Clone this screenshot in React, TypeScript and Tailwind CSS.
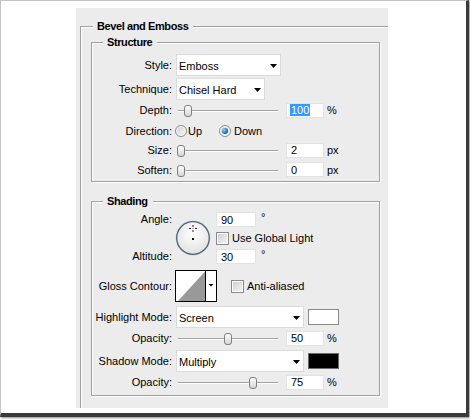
import React from "react";

const F = "font-['Liberation_Sans',Arial,sans-serif]";

function Arrow() {
  return (
    <svg width="7" height="4" viewBox="0 0 7 4" className="block shrink-0">
      <path d="M0 0H7L3.5 4Z" fill="#000" />
    </svg>
  );
}

function Dropdown({ text, className }: { text: string; className: string }) {
  return (
    <div
      className={`h-[22px] bg-white border border-[#dadada] flex items-center justify-between pl-[2px] pr-[3px] shrink-0 ${className}`}
    >
      <span className="pt-[2px]">{text}</span>
      <span className="pt-[2px]">
        <Arrow />
      </span>
    </div>
  );
}

function Field({ children, className }: { children: React.ReactNode; className: string }) {
  return (
    <div className={`h-[15px] bg-white border border-[#e2e2e2] flex items-center pl-[3px] shrink-0 ${className}`}>
      {children}
    </div>
  );
}

function Slider({ pos }: { pos: string }) {
  return (
    <div className="relative w-[102px] h-[14px] shrink-0">
      <div className="absolute left-[2px] right-0 top-[6px] h-px bg-[#a3a3a3] shadow-[0_1px_0_#fff]" />
      <div
        className={`absolute top-px w-[8px] h-[12px] rounded-[3px] border border-[#808080] bg-gradient-to-b from-[#fdfdfd] to-[#d6d6d6] ${pos}`}
      />
    </div>
  );
}

function Label({ children }: { children: React.ReactNode }) {
  return <div className="w-[80px] text-right shrink-0 whitespace-nowrap">{children}</div>;
}

function SliderRow({
  label,
  pos,
  value,
  unit,
  h,
  selected,
}: {
  label: string;
  pos: string;
  value: string;
  unit: string;
  h: string;
  selected?: boolean;
}) {
  return (
    <div className={`flex items-center ${h}`}>
      <Label>{label}</Label>
      <div className="ml-[4px] mt-[2px]">
        <Slider pos={pos} />
      </div>
      <Field className={`ml-[8px] w-[38px] ${selected ? "border-[#c9d6e6]" : ""}`}>
        {selected ? (
          <span className="bg-[#3399ff] text-white px-px leading-[12px]">{value}</span>
        ) : (
          <span className="pl-px">{value}</span>
        )}
      </Field>
      <span className="ml-[3px]">{unit}</span>
    </div>
  );
}

function Radio({ checked }: { checked?: boolean }) {
  return (
    <div className="w-[12px] h-[12px] rounded-full border border-[#8a8a8a] bg-gradient-to-br from-[#cfcfcf] to-[#fbfbfb] shadow-[inset_0_0_0_1px_#fff] flex items-center justify-center shrink-0">
      {checked && (
        <div className="w-[6px] h-[6px] rounded-full bg-[radial-gradient(circle_at_35%_35%,#9fd8ff,#1b6fbf_55%,#0a3a70)]" />
      )}
    </div>
  );
}

function Checkbox() {
  return (
    <div className="w-[13px] h-[13px] border border-[#8a8a8a] bg-gradient-to-br from-[#cdcdcd] to-[#f6f6f6] shadow-[inset_0_0_0_1px_#fff] shrink-0" />
  );
}

function GroupTitle({ children, left }: { children: React.ReactNode; left: string }) {
  return (
    <span className={`absolute top-[-9px] ${left} bg-[#ececec] pl-[4px] pr-[5px] font-bold leading-[16px] tracking-[-0.4px]`}>
      {children}
    </span>
  );
}

function AngleDial() {
  return (
    <svg width="36" height="36" viewBox="0 0 36 36" className="block shrink-0 self-center">
      <defs>
        <radialGradient id="dialg" cx="50%" cy="35%" r="65%">
          <stop offset="0" stopColor="#ffffff" />
          <stop offset="1" stopColor="#e2e2e2" />
        </radialGradient>
      </defs>
      <circle cx="18" cy="18" r="17.5" fill="#c8ccd3" opacity="0.6" />
      <circle cx="18" cy="18" r="16.3" fill="url(#dialg)" stroke="#56627a" strokeWidth="1.3" />
      <rect x="17" y="18" width="2" height="2" fill="#000" />
      <rect x="17.5" y="5" width="1" height="2" fill="#222" />
      <rect x="17.5" y="10" width="1" height="2" fill="#222" />
      <rect x="14" y="8" width="2" height="1" fill="#222" />
      <rect x="20" y="8" width="2" height="1" fill="#222" />
      <rect x="17.5" y="8" width="1" height="1" fill="#555" />
    </svg>
  );
}

function Contour() {
  return (
    <svg width="42" height="32" viewBox="0 0 42 32" className="block shrink-0">
      <rect x="0.5" y="0.5" width="41" height="31" fill="#fff" stroke="#000" />
      <path d="M3 31 L30 1.5 L30 31 Z" fill="#999999" />
      <line x1="30.5" y1="0" x2="30.5" y2="32" stroke="#000" />
      <path d="M33.5 14 H38.5 L36 16.5 Z" fill="#000" />
    </svg>
  );
}

export default function App() {
  return (
    <div className={`w-[470px] h-[420px] bg-white ${F} text-[11px] leading-[14px] text-black`}>
      <div className="w-[469px] h-[417px] border-l border-t border-[#c4c4c4] border-r-[3px] border-b-[4px] border-r-[#3a3a3a] border-b-[#3a3a3a] shadow-[1px_1px_2px_rgba(0,0,0,0.45)]">
        <div className="ml-[75px] mt-[7px] w-[312px] h-[400px] bg-[#ececec] overflow-hidden">
          <div className="relative ml-[4px] mt-[18px] h-[420px] border-l border-t border-[#a0a0a0] shadow-[inset_1px_1px_0_#fff]">
            <GroupTitle left="left-[12px]">Bevel and Emboss</GroupTitle>

            {/* Structure */}
            <div className="relative ml-[10px] mt-[15px] w-[289px] h-[140px] border border-[#a0a0a0] shadow-[inset_1px_1px_0_#fff,1px_1px_0_#fff]">
              <GroupTitle left="left-[11px]">Structure</GroupTitle>
              <div className="pt-[11px] flex flex-col">
                <div className="flex items-center h-[22px]">
                  <Label>Style:</Label>
                  <Dropdown text="Emboss" className="ml-[4px] w-[105px]" />
                </div>
                <div className="flex items-center h-[22px] mt-[2px]">
                  <Label>Technique:</Label>
                  <Dropdown text="Chisel Hard" className="ml-[4px] w-[89px]" />
                </div>
                <SliderRow label="Depth:" pos="left-[8px]" value="100" unit="%" h="h-[20px]" selected />
                <div className="flex items-center h-[21px]">
                  <Label>Direction:</Label>
                  <div className="ml-[3px]">
                    <Radio />
                  </div>
                  <span className="ml-[1px]">Up</span>
                  <div className="ml-[17px]">
                    <Radio checked />
                  </div>
                  <span className="ml-[3px]">Down</span>
                </div>
                <SliderRow label="Size:" pos="left-[1px]" value="2" unit="px" h="h-[18px]" />
                <SliderRow label="Soften:" pos="left-[1px]" value="0" unit="px" h="h-[21px]" />
              </div>
            </div>

            {/* Shading */}
            <div className="relative ml-[10px] mt-[19px] w-[289px] h-[195px] border border-[#a0a0a0] shadow-[inset_1px_1px_0_#fff,1px_1px_0_#fff]">
              <GroupTitle left="left-[11px]">Shading</GroupTitle>
              <div className="pt-[10px] flex flex-col">
                <div className="flex h-[52px]">
                  <div className="w-[80px] shrink-0 flex flex-col justify-between text-right">
                    <div className="leading-[15px]">Angle:</div>
                    <div className="leading-[15px]">Altitude:</div>
                  </div>
                  <div className="ml-[3px] flex">
                    <AngleDial />
                  </div>
                  <div className="ml-[5px] flex flex-col">
                    <div className="flex items-start">
                      <Field className="w-[40px]">
                        <span className="pl-px">90</span>
                      </Field>
                      <span className="ml-[5px] leading-[10px]">°</span>
                    </div>
                    <div className="flex items-center mt-[4px] h-[14px]">
                      <Checkbox />
                      <span className="ml-[3px]">Use Global Light</span>
                    </div>
                    <div className="flex items-start mt-[4px]">
                      <Field className="w-[40px]">
                        <span className="pl-px">30</span>
                      </Field>
                      <span className="ml-[5px] leading-[10px]">°</span>
                    </div>
                  </div>
                </div>

                <div className="flex items-center mt-[6px] h-[32px]">
                  <Label>Gloss Contour:</Label>
                  <div className="ml-[3px]">
                    <Contour />
                  </div>
                  <div className="ml-[14px]">
                    <Checkbox />
                  </div>
                  <span className="ml-[3px]">Anti-aliased</span>
                </div>

                <div className="flex items-center mt-[4px] h-[22px]">
                  <Label>Highlight Mode:</Label>
                  <Dropdown text="Screen" className="ml-[4px] w-[128px]" />
                  <div className="ml-[4px] w-[31px] h-[16px] bg-white border border-[#8a8a8a]" />
                </div>
                <SliderRow label="Opacity:" pos="left-[48px]" value="50" unit="%" h="h-[20px]" />
                <div className="flex items-center mt-[2px] h-[22px]">
                  <Label>Shadow Mode:</Label>
                  <Dropdown text="Multiply" className="ml-[4px] w-[128px]" />
                  <div className="ml-[4px] w-[31px] h-[16px] bg-black border border-[#6a6a6a]" />
                </div>
                <SliderRow label="Opacity:" pos="left-[73px]" value="75" unit="%" h="h-[20px]" />
              </div>
            </div>
          </div>
        </div>
      </div>
    </div>
  );
}
